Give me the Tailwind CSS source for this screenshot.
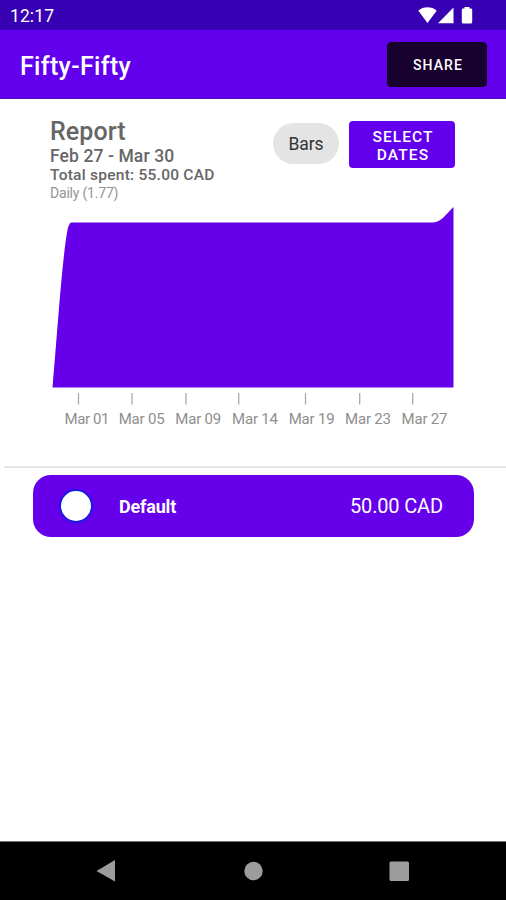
<!DOCTYPE html>
<html lang="en">
<head>
    <meta charset="UTF-8">
    <meta name="viewport" content="width=device-width, initial-scale=1.0">
    <title>Fifty-Fifty</title>
    <script src="https://cdn.jsdelivr.net/npm/@tailwindcss/browser@4"></script>
</head>
<body class="bg-white">
<div class="flex flex-col w-[506px] h-[900px] overflow-hidden bg-white font-[Roboto,sans-serif]">
    <!-- status bar -->
    <div class="flex items-center justify-between h-[30px] pl-[10px] pr-[33px] pt-0.5 bg-[#3700b3] text-white shrink-0">
        <span class="text-[17.5px] leading-none tracking-[0.1px] pt-0.5">12:17</span>
        <svg class="-mt-0.5" width="55" height="18" viewBox="0 0 55 18" fill="currentColor">
            <path d="M0.3 4.8C5 0.2 14 0.2 18.7 4.8L9.5 17Z"/>
            <path d="M20 17.3L35.5 1.5V17.3Z"/>
            <path d="M46.500 1H51.500V2.500H53Q54.200 2.500 54.200 3.800V16Q54.200 17.500 52.800 17.500H45.200Q43.800 17.500 43.800 16V3.800Q43.800 2.500 45 2.500H46.500Z"/>
        </svg>
    </div>
    <!-- app bar -->
    <header class="flex items-center justify-between h-[69px] pl-5 pr-[19px] bg-[#6200ee] text-white border-b border-[#4b12bd] shrink-0">
        <h1 class="text-[25px] font-medium leading-none tracking-[0.33px] pt-1">Fifty-Fifty</h1>
        <button type="button" class="w-[100px] h-[45px] pt-0.5 pl-0.5 rounded bg-[#18002f] border border-[#12001f] text-sm font-medium tracking-[1.1px]">SHARE</button>
    </header>

    <main class="grow">
        <div class="flex justify-between pl-[50px] pr-[51px] pt-[19px] h-[108px]">
            <div class="text-[#666]">
                <h2 class="text-[25px] leading-[28px] font-medium tracking-[0.1px]">Report</h2>
                <p class="text-[17.500px] leading-[20px] font-medium tracking-[0.1px]">Feb 27 - Mar 30</p>
                <p class="text-[15.500px] leading-[18px] font-medium tracking-[0.25px]">Total spent: 55.00 CAD</p>
                <p class="text-[14px] leading-[18px] tracking-[-0.2px] text-[#959595]">Daily (1.77)</p>
            </div>
            <div class="flex gap-2.5 pt-[3px]">
                <button type="button" class="w-[66px] h-[41px] mt-0.5 pt-0.5 rounded-full bg-[#e4e4e4] text-[#333] text-[17.500px] tracking-[-0.1px]">Bars</button>
                <button type="button" class="w-[106px] h-[47px] pt-0.5 pl-0.5 rounded bg-[#6200ee] text-white text-[15.500px] leading-[18px] font-medium tracking-[1.1px]">SELECT DATES</button>
            </div>
        </div>
        <!-- chart -->
        <svg class="block" width="506" height="259" viewBox="0 207 506 259">
            <path fill="#6600ea" d="M52.500 387.500C58 325 62 260 67.500 230Q69 222.500 71.500 222.500H433C441 222.500 446 214 453.500 207V387.500Z"/>
            <g stroke="#aaa" stroke-width="1.300">
                <path d="M78.500 393V404.500M132 393V404.500M186 393V404.500M238.700 393V404.500M305.500 393V404.500M359.700 393V404.500M412.700 393V404.500"/>
            </g>
            <g fill="#8e8e8e" font-size="15">
                <text x="64.500" y="423.500" textLength="45">Mar 01</text>
                <text x="118.700" y="423.500" textLength="46">Mar 05</text>
                <text x="175.300" y="423.500" textLength="46">Mar 09</text>
                <text x="232" y="423.500" textLength="46">Mar 14</text>
                <text x="288.700" y="423.500" textLength="46">Mar 19</text>
                <text x="345" y="423.500" textLength="46">Mar 23</text>
                <text x="401.500" y="423.500" textLength="46">Mar 27</text>
            </g>
        </svg>
        <div class="h-0.5 ml-1 bg-[#e6e6e6]"></div>
        <!-- category -->
        <div class="flex items-center h-[62px] mt-[7px] ml-[33px] mr-8 pl-[26px] pr-[31px] rounded-[18px] bg-[#6600ea] text-white">
            <span class="size-[34px] rounded-full bg-white border-2 border-[#1c18e6]"></span>
            <span class="ml-[26px] text-[18px] font-bold tracking-[-0.2px]">Default</span>
            <span class="ml-auto text-xl tracking-[-0.15px]">50.00 CAD</span>
        </div>
    </main>

    <!-- system navigation -->
    <nav class="h-[59px] bg-black border-t border-[#777] shrink-0">
        <svg width="506" height="58" viewBox="0 842 506 58" fill="#9c9c9c">
            <path d="M96.500 871L115 860V881.500Z"/>
            <circle cx="253.500" cy="871" r="9.200"/>
            <rect x="389.500" y="861.500" width="19.500" height="19.500" rx="1.500"/>
        </svg>
    </nav>
</div>
</body>
</html>
